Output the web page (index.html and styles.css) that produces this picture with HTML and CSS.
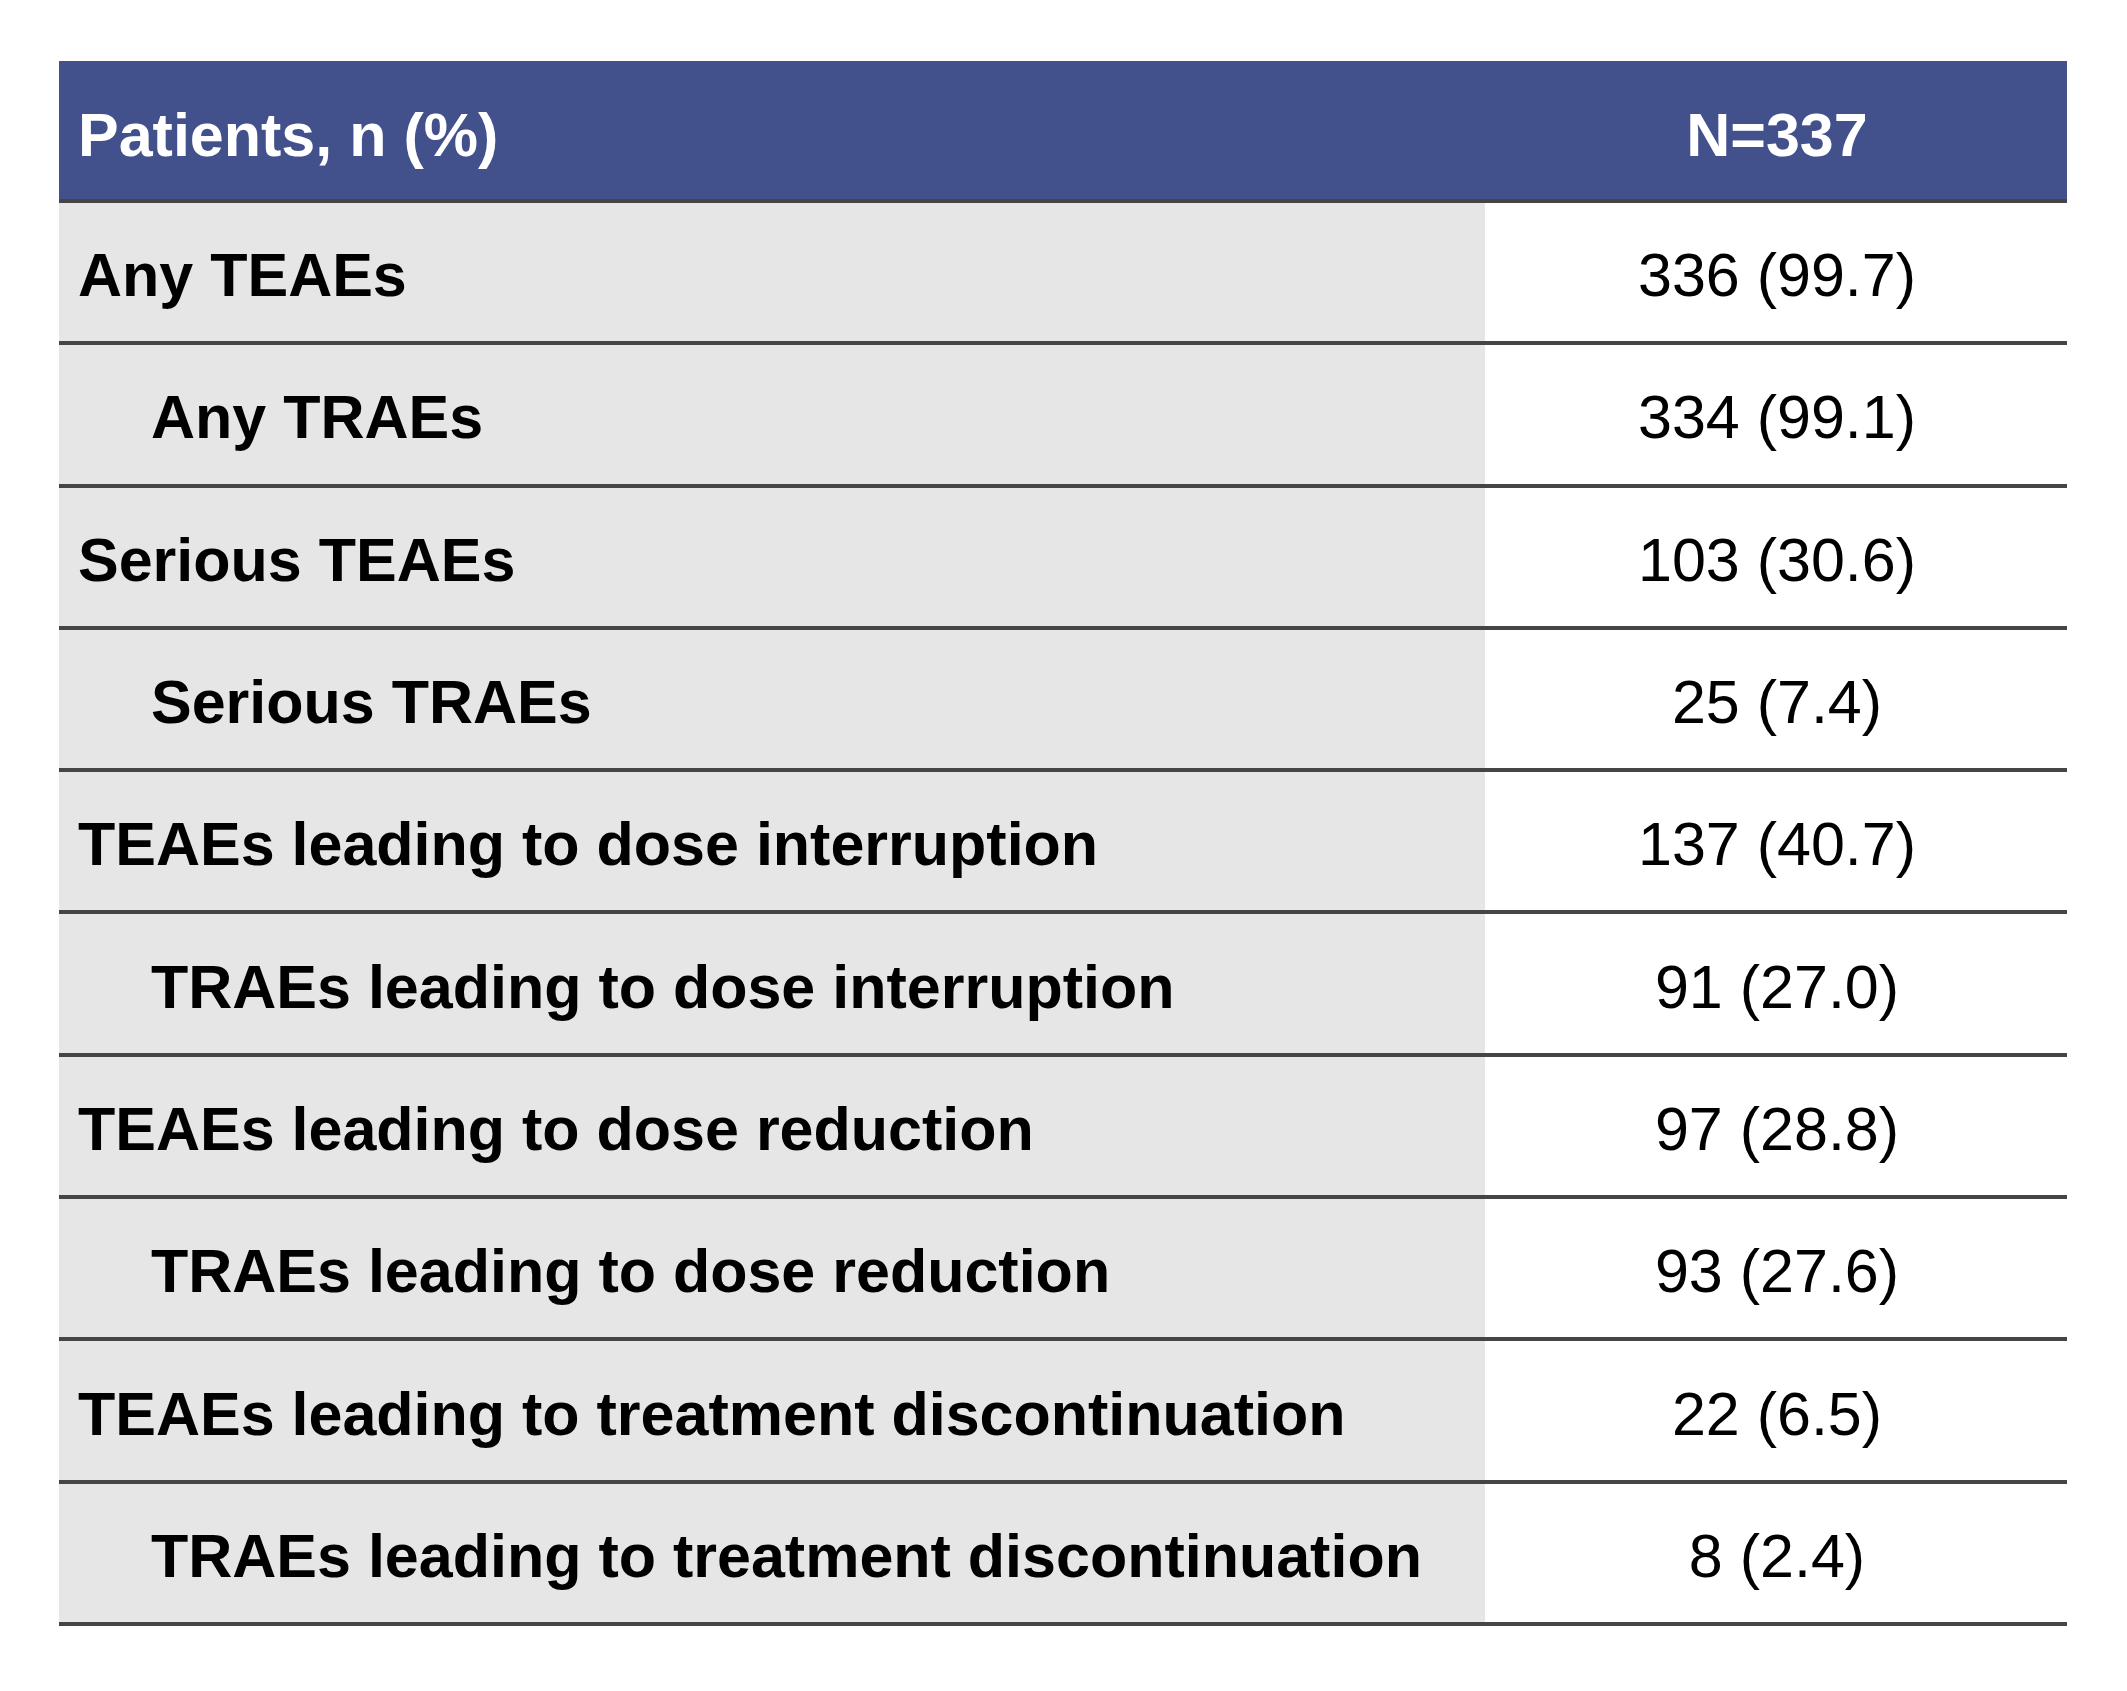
FILE: index.html
```html
<!DOCTYPE html>
<html lang="en">
<head>
<meta charset="utf-8">
<title>Adverse events summary</title>
<link rel="stylesheet" href="styles.css">
</head>
<body>
<div class="table">
  <div class="row head">
    <div class="label">Patients, n (%)</div>
    <div class="value">N=337</div>
  </div>
  <div class="row">
    <div class="label">Any TEAEs</div>
    <div class="value">336 (99.7)</div>
  </div>
  <div class="row sub">
    <div class="label">Any TRAEs</div>
    <div class="value">334 (99.1)</div>
  </div>
  <div class="row">
    <div class="label">Serious TEAEs</div>
    <div class="value">103 (30.6)</div>
  </div>
  <div class="row sub">
    <div class="label">Serious TRAEs</div>
    <div class="value">25 (7.4)</div>
  </div>
  <div class="row">
    <div class="label">TEAEs leading to dose interruption</div>
    <div class="value">137 (40.7)</div>
  </div>
  <div class="row sub">
    <div class="label">TRAEs leading to dose interruption</div>
    <div class="value">91 (27.0)</div>
  </div>
  <div class="row">
    <div class="label">TEAEs leading to dose reduction</div>
    <div class="value">97 (28.8)</div>
  </div>
  <div class="row sub">
    <div class="label">TRAEs leading to dose reduction</div>
    <div class="value">93 (27.6)</div>
  </div>
  <div class="row">
    <div class="label">TEAEs leading to treatment discontinuation</div>
    <div class="value">22 (6.5)</div>
  </div>
  <div class="row sub">
    <div class="label">TRAEs leading to treatment discontinuation</div>
    <div class="value">8 (2.4)</div>
  </div>
</div>
</body>
</html>
```

FILE: styles.css
```css
html, body {
  margin: 0;
  padding: 0;
  background: #ffffff;
}

body {
  padding: 61px 0 0 59px;
  font-family: "Liberation Sans", Arial, sans-serif;
  font-size: 61px;
  color: #000000;
}

.table {
  width: 2008px;
  display: flex;
  flex-direction: column;
}

.row {
  display: grid;
  grid-template-columns: 1426px 1fr;
  height: 142.3px;
  box-sizing: border-box;
  border-bottom: 4px solid #454545;
}

.label,
.value {
  display: flex;
  align-items: center;
  padding-top: 7px;
  line-height: 1;
  white-space: nowrap;
}

.label {
  background: #e6e6e6;
  font-weight: bold;
  padding-left: 19px;
}

.value {
  justify-content: center;
  padding-left: 2px;
}

.sub .label {
  padding-left: 92px;
}

.head {
  height: 142px;
  background: #42508c;
  color: #ffffff;
}

.head .label,
.head .value {
  padding-top: 10px;
}

.head .label {
  background: transparent;
}

.head .value {
  font-weight: bold;
}
```
